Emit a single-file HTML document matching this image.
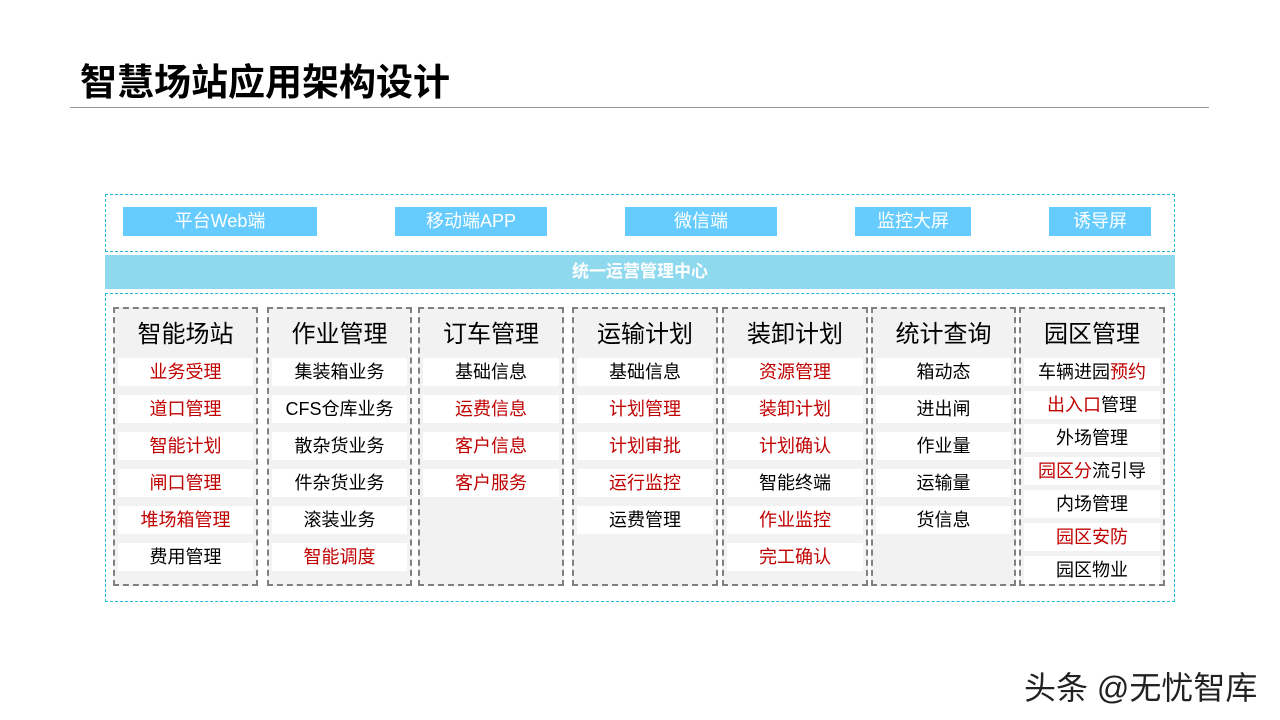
<!DOCTYPE html><html><head><meta charset="utf-8"><style>
body{margin:0;width:1280px;height:720px;background:#fff;position:relative;overflow:hidden;font-family:"Liberation Sans","Noto Sans CJK SC",sans-serif}
.a{position:absolute}
.t{left:80px;top:52px;font-size:37px;font-weight:bold;color:#000}
.p{background:#66ccff;color:#fff;font-size:18px;text-align:center;line-height:29px;top:207px;height:29px}
.col{top:307px;height:279px;border:2px dashed #808080;background:#f2f2f2;box-sizing:border-box}
.h{text-align:center;font-size:24px;margin-top:11px;height:38px;line-height:30px;color:#000}
.i{background:#fff;margin:0 3px 9px;height:28px;line-height:28px;text-align:center;font-size:18px;color:#000}
.r{color:#c00000}
.c7 .i{margin-bottom:5px}
</style></head><body>
<div class="a t">智慧场站应用架构设计</div>
<div class="a" style="left:70px;top:107px;width:1139px;height:1px;background:#999"></div>
<div class="a" style="left:105px;top:194px;width:1068px;height:56px;border:1px dashed #1fb8d8"></div>
<div class="a p" style="left:123px;width:194px">平台Web端</div>
<div class="a p" style="left:395px;width:152px">移动端APP</div>
<div class="a p" style="left:625px;width:152px">微信端</div>
<div class="a p" style="left:855px;width:116px">监控大屏</div>
<div class="a p" style="left:1049px;width:102px">诱导屏</div>
<div class="a" style="left:105px;top:255px;width:1070px;height:34px;background:#8fd9ee;color:#fff;font-weight:bold;font-size:17px;text-align:center;line-height:34px">统一运营管理中心</div>
<div class="a" style="left:105px;top:293px;width:1068px;height:307px;border:1px dashed #1fb8d8"></div>
<div class="a col" style="left:113px;width:145px"><div class="h">智能场站</div><div class="i r">业务受理</div><div class="i r">道口管理</div><div class="i r">智能计划</div><div class="i r">闸口管理</div><div class="i r">堆场箱管理</div><div class="i">费用管理</div></div>
<div class="a col" style="left:267px;width:145px"><div class="h">作业管理</div><div class="i">集装箱业务</div><div class="i">CFS仓库业务</div><div class="i">散杂货业务</div><div class="i">件杂货业务</div><div class="i">滚装业务</div><div class="i r">智能调度</div></div>
<div class="a col" style="left:418px;width:146px"><div class="h">订车管理</div><div class="i">基础信息</div><div class="i r">运费信息</div><div class="i r">客户信息</div><div class="i r">客户服务</div></div>
<div class="a col" style="left:572px;width:146px"><div class="h">运输计划</div><div class="i">基础信息</div><div class="i r">计划管理</div><div class="i r">计划审批</div><div class="i r">运行监控</div><div class="i">运费管理</div></div>
<div class="a col" style="left:722px;width:146px"><div class="h">装卸计划</div><div class="i r">资源管理</div><div class="i r">装卸计划</div><div class="i r">计划确认</div><div class="i">智能终端</div><div class="i r">作业监控</div><div class="i r">完工确认</div></div>
<div class="a col" style="left:871px;width:145px"><div class="h">统计查询</div><div class="i">箱动态</div><div class="i">进出闸</div><div class="i">作业量</div><div class="i">运输量</div><div class="i">货信息</div></div>
<div class="a col c7" style="left:1019px;width:146px"><div class="h">园区管理</div><div class="i">车辆进园<span class="r">预约</span></div><div class="i"><span class="r">出入口</span>管理</div><div class="i">外场管理</div><div class="i"><span class="r">园区分</span>流引导</div><div class="i">内场管理</div><div class="i r">园区安防</div><div class="i">园区物业</div></div>
<div class="a" style="left:1024px;top:663px;font-size:32px;color:#222">头条 @无忧智库</div>
</body></html>
